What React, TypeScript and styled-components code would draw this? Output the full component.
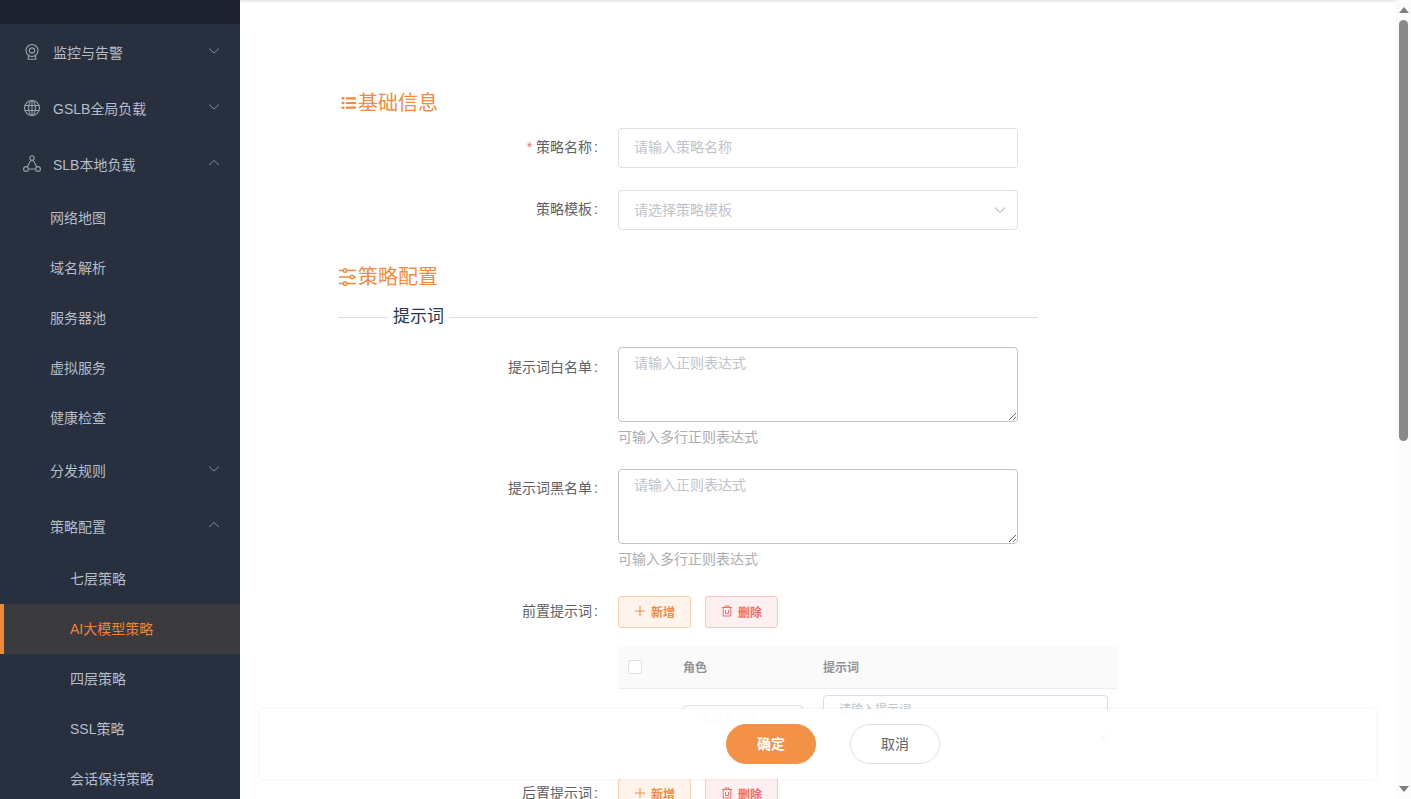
import React from "react";
import styled, { createGlobalStyle } from "styled-components";

const Global = createGlobalStyle`
  html, body { margin: 0; padding: 0; height: 100%; overflow: hidden; background: #fff; }
  * { box-sizing: border-box; }
  body { font-family: "Liberation Sans", "Noto Sans CJK SC", sans-serif; }
  input::placeholder, textarea::placeholder { color: #c0c4cc; }
`;

const Shell = styled.div`
  display: flex;
  width: 100vw;
  height: 100vh;
  overflow: hidden;
`;

const Sidebar = styled.aside`
  flex: 0 0 240px;
  height: 100%;
  overflow: hidden;
  background: #28303f;
  color: #b5bcc7;
  font-size: 14px;
`;

const SideTop = styled.div`
  height: 24px;
  background: #1d2430;
`;

const ParentRow = styled.div<{ $indent: number }>`
  height: 56px;
  display: flex;
  align-items: center;
  padding-left: ${(p) => p.$indent}px;
  position: relative;
  color: #b5bcc7;
  svg.lead { margin-right: 12px; flex: none; }
`;

const Chev = styled.svg`
  position: absolute;
  left: 208px;
  top: 23px;
`;

const SubRow = styled.div<{ $indent: number; $active?: boolean; $nudge?: boolean }>`
  height: 50px;
  display: flex;
  align-items: center;
  padding-left: ${(p) => (p.$active ? p.$indent - 4 : p.$indent)}px;
  padding-bottom: ${(p) => (p.$nudge ? 2 : 0)}px;
  background: ${(p) => (p.$active ? "#3a3a3f" : "transparent")};
  border-left: ${(p) => (p.$active ? "4px solid #f18a36" : "none")};
  color: ${(p) => (p.$active ? "#f58233" : "#b5bcc7")};
`;

const Main = styled.main`
  flex: 1;
  height: 100%;
  position: relative;
  overflow: hidden;
  padding: 89px 0 0 98px;
  box-shadow: inset 0 3px 3px -2px rgba(0, 0, 0, 0.14);
`;

const Form = styled.form`
  width: 780px;
  display: flex;
  flex-direction: column;
`;

const SectionTitle = styled.h3<{ $pl?: number }>`
  margin: 0 0 11px 0;
  height: 28px;
  padding-left: ${(p) => p.$pl ?? 0}px;
  display: flex;
  align-items: center;
  font-size: 20px;
  font-weight: 400;
  line-height: 28px;
  color: #f48a3c;
  gap: 2px;
`;

const Divider = styled.div`
  width: 700px;
  height: 22px;
  margin: 4px 0 19px;
  display: flex;
  align-items: center;
  font-size: 17px;
  color: #2c3550;
  &::before { content: ""; width: 50px; height: 1px; background: #dcdfe6; margin-right: 5px; }
  &::after { content: ""; flex: 1; height: 1px; background: #dcdfe6; margin-left: 5px; }
`;

const DividerText = styled.span`
  padding-bottom: 5px;
`;

const Field = styled.div<{ $mb?: number }>`
  display: grid;
  grid-template-columns: 280px 1fr;
  margin-bottom: ${(p) => p.$mb ?? 22}px;
`;

const Label = styled.label<{ $h?: number; $lift?: number }>`
  height: ${(p) => p.$h ?? 40}px;
  line-height: ${(p) => (p.$h ?? 40) - (p.$lift ?? 0)}px;
  padding-right: 20px;
  text-align: right;
  font-size: 14px;
  color: #606266;
  white-space: nowrap;
`;

const Star = styled.span`
  color: #f56c6c;
  margin-right: 4px;
`;

const Colon = styled.span`
  padding-left: 2px;
`;

const Control = styled.div`
  display: flex;
  flex-direction: column;
  min-width: 0;
`;

const TextInput = styled.input`
  width: 400px;
  height: 40px;
  padding: 0 15px 2px;
  border: 1px solid #dcdfe6;
  border-radius: 4px;
  font: inherit;
  font-size: 14px;
  background: #fff;
  outline: none;
`;

const SelectBox = styled.div`
  width: 400px;
  height: 40px;
  padding: 0 11px 2px 15px;
  border: 1px solid #dcdfe6;
  border-radius: 4px;
  font-size: 14px;
  color: #c0c4cc;
  display: flex;
  align-items: center;
  justify-content: space-between;
  svg { margin-top: 2px; }
`;

const Area = styled.textarea`
  display: block;
  width: 400px;
  height: 75px;
  padding: 5px 15px;
  border: 1px solid #c2c2ca;
  border-radius: 4px;
  font: inherit;
  font-size: 14px;
  line-height: 21px;
  resize: vertical;
  outline: none;
`;

const Hint = styled.div`
  font-size: 14px;
  line-height: 22px;
  margin-top: 4px;
  color: #adadb2;
`;

const BtnRow = styled.div`
  display: flex;
  gap: 14px;
  height: 32px;
`;

const ToolBtn = styled.button<{ $danger?: boolean }>`
  width: 73px;
  height: 32px;
  display: flex;
  align-items: center;
  justify-content: center;
  gap: 5px;
  padding: 0 0 2px;
  border-radius: 3px;
  font: inherit;
  font-size: 12px;
  font-weight: 700;
  border: 1px solid ${(p) => (p.$danger ? "#fbc4c4" : "#fbd3b3")};
  background: ${(p) => (p.$danger ? "#fef0f0" : "#fef4ec")};
  color: ${(p) => (p.$danger ? "#f56c6c" : "#f48a3c")};
`;

const Table = styled.div`
  width: 500px;
  margin-top: 18px;
  font-size: 12px;
`;

const HeadRow = styled.div`
  display: grid;
  grid-template-columns: 65px 140px 1fr;
  height: 43px;
  align-items: center;
  background: #fafafa;
  border-bottom: 1px solid #ebeef5;
  border-radius: 4px 4px 0 0;
  color: #909399;
  font-weight: 700;
`;

const HeadCell = styled.span`
  padding-bottom: 2px;
`;

const BodyRow = styled.div`
  display: grid;
  grid-template-columns: 65px 140px 1fr;
  height: 61px;
  align-items: center;
  border-bottom: 1px solid #ebeef5;
`;

const Check = styled.span`
  display: block;
  width: 14px;
  height: 14px;
  margin-left: 10px;
  border: 1px solid #dcdfe6;
  border-radius: 2px;
  background: #fff;
`;

const RoleInput = styled.input`
  width: 120px;
  height: 28px;
  padding: 0 15px;
  border: 1px solid #dcdfe6;
  border-radius: 4px;
  font: inherit;
  font-size: 12px;
  outline: none;
`;

const PromptArea = styled.textarea`
  display: block;
  width: 285px;
  height: 48px;
  padding: 5px 15px;
  border: 1px solid #dcdfe6;
  border-radius: 4px;
  font: inherit;
  font-size: 12px;
  line-height: 18px;
  resize: vertical;
  outline: none;
`;

const Footer = styled.div`
  position: absolute;
  left: 20px;
  right: 20px;
  bottom: 20px;
  height: 70px;
  display: flex;
  align-items: center;
  justify-content: center;
  gap: 34px;
  padding-left: 30px;
  background: rgba(255, 255, 255, 0.92);
  box-shadow: 0 0 4px rgba(0, 0, 0, 0.07);
`;

const PillBtn = styled.button<{ $primary?: boolean }>`
  width: 90px;
  height: 40px;
  padding: 0 0 2px;
  border-radius: 20px;
  font: inherit;
  font-size: 14px;
  font-weight: ${(p) => (p.$primary ? 700 : 400)};
  border: 1px solid ${(p) => (p.$primary ? "#f39247" : "#dcdfe6")};
  background: ${(p) => (p.$primary ? "#f39247" : "#fff")};
  color: ${(p) => (p.$primary ? "#fff" : "#606266")};
`;

const ScrollRail = styled.div`
  flex: 0 0 15px;
  height: 100%;
  background: #fbfbfb;
  display: flex;
  flex-direction: column;
  align-items: center;
  padding-top: 7px;
`;

const ArrowUp = styled.div`
  width: 0;
  height: 0;
  border-left: 5px solid transparent;
  border-right: 5px solid transparent;
  border-bottom: 6px solid #7e7e7e;
`;

const ArrowDown = styled.div`
  width: 0;
  height: 0;
  border-left: 5px solid transparent;
  border-right: 5px solid transparent;
  border-top: 6px solid #7e7e7e;
  margin-bottom: 7px;
`;

const Thumb = styled.div`
  width: 9px;
  height: 421px;
  margin-top: 7px;
  border-radius: 5px;
  background: #8a8a8a;
`;

const Spacer = styled.div`
  flex: 1;
`;

const ChevDown = () => (
  <Chev width="12" height="8" viewBox="0 0 12 8" fill="none" stroke="#7f8998" strokeWidth="1">
    <path d="M1 1.5 L6 6 L11 1.5" />
  </Chev>
);
const ChevUp = () => (
  <Chev width="12" height="8" viewBox="0 0 12 8" fill="none" stroke="#7f8998" strokeWidth="1">
    <path d="M1 6 L6 1.5 L11 6" />
  </Chev>
);

const CamIcon = () => (
  <svg className="lead" width="18" height="18" viewBox="0 0 18 18" fill="none" stroke="#98a0ad" strokeWidth="1.1">
    <circle cx="9" cy="7.5" r="6" />
    <circle cx="9" cy="7.5" r="2.6" />
    <path d="M5.5 13 L5 16.2 H13 L12.5 13" />
  </svg>
);
const GlobeIcon = () => (
  <svg className="lead" width="18" height="18" viewBox="0 0 18 18" fill="none" stroke="#98a0ad" strokeWidth="1.1">
    <circle cx="9" cy="9" r="7.5" />
    <ellipse cx="9" cy="9" rx="3.4" ry="7.5" />
    <path d="M1.8 6.5 H16.2 M1.8 11.5 H16.2 M9 1.5 V16.5" />
  </svg>
);
const NodesIcon = () => (
  <svg className="lead" width="18" height="18" viewBox="0 0 18 18" fill="none" stroke="#98a0ad" strokeWidth="1.1">
    <circle cx="9" cy="3" r="2.2" />
    <circle cx="3" cy="14" r="2.4" />
    <circle cx="15" cy="14" r="2.4" />
    <path d="M8 5 L4.2 12 M10 5 L13.8 12 M5.4 14 H12.6" />
  </svg>
);

const ListIcon = () => (
  <svg width="15" height="14" viewBox="0 0 15 14" fill="#f48a3c">
    <rect x="0.5" y="1" width="3" height="2.6" rx="1" />
    <rect x="0.5" y="5.7" width="3" height="2.6" rx="1" />
    <rect x="0.5" y="10.4" width="3" height="2.6" rx="1" />
    <rect x="5" y="1.2" width="10" height="2.2" rx="0.4" />
    <rect x="5" y="5.9" width="10" height="2.2" rx="0.4" />
    <rect x="5" y="10.6" width="10" height="2.2" rx="0.4" />
  </svg>
);
const SlidersIcon = () => (
  <svg width="18" height="18" viewBox="0 0 18 18" fill="none" stroke="#f48a3c" strokeWidth="1.4">
    <path d="M1 2.5 H5 M9 2.5 H18 M1 9 H12 M16 9 H18 M1 15.5 H5 M9 15.5 H18" />
    <circle cx="7" cy="2.5" r="1.8" />
    <circle cx="14" cy="9" r="1.8" />
    <circle cx="7" cy="15.5" r="1.8" />
  </svg>
);
const SelectChev = () => (
  <svg width="12" height="8" viewBox="0 0 12 8" fill="none" stroke="#c0c4cc" strokeWidth="1.1">
    <path d="M1 1.5 L6 6.5 L11 1.5" />
  </svg>
);
const PlusIcon = () => (
  <svg width="12" height="12" viewBox="0 0 12 12" fill="none" stroke="#f48a3c" strokeWidth="1">
    <path d="M6 1 V11 M1 6 H11" />
  </svg>
);
const TrashIcon = () => (
  <svg width="12" height="12" viewBox="0 0 12 12" fill="none" stroke="#f56c6c" strokeWidth="1">
    <path d="M1 2.5 H11 M4 2.5 V1 H8 V2.5 M2.2 2.5 V11 H9.8 V2.5 M4.5 5 V8.5 H7.5 V5" />
  </svg>
);

const Tools = () => (
  <BtnRow>
    <ToolBtn type="button"><PlusIcon />新增</ToolBtn>
    <ToolBtn type="button" $danger><TrashIcon />删除</ToolBtn>
  </BtnRow>
);

export default function App() {
  return (
    <Shell>
      <Global />
      <Sidebar>
        <SideTop />
        <ParentRow $indent={23}><CamIcon />监控与告警<ChevDown /></ParentRow>
        <ParentRow $indent={23}><GlobeIcon />GSLB全局负载<ChevDown /></ParentRow>
        <ParentRow $indent={23}><NodesIcon />SLB本地负载<ChevUp /></ParentRow>
        <SubRow $indent={50}>网络地图</SubRow>
        <SubRow $indent={50}>域名解析</SubRow>
        <SubRow $indent={50}>服务器池</SubRow>
        <SubRow $indent={50}>虚拟服务</SubRow>
        <SubRow $indent={50}>健康检查</SubRow>
        <ParentRow $indent={50}>分发规则<ChevDown /></ParentRow>
        <ParentRow $indent={50}>策略配置<ChevUp /></ParentRow>
        <SubRow $indent={70} $nudge>七层策略</SubRow>
        <SubRow $indent={70} $nudge $active>AI大模型策略</SubRow>
        <SubRow $indent={70} $nudge>四层策略</SubRow>
        <SubRow $indent={70} $nudge>SSL策略</SubRow>
        <SubRow $indent={70} $nudge>会话保持策略</SubRow>
      </Sidebar>
      <Main>
        <Form>
          <SectionTitle $pl={3}><ListIcon />基础信息</SectionTitle>
          <Field>
            <Label $lift={1}><Star>*</Star>策略名称<Colon>:</Colon></Label>
            <Control><TextInput placeholder="请输入策略名称" /></Control>
          </Field>
          <Field $mb={33}>
            <Label $lift={1}>策略模板<Colon>:</Colon></Label>
            <Control>
              <SelectBox>请选择策略模板<SelectChev /></SelectBox>
            </Control>
          </Field>
          <SectionTitle><SlidersIcon />策略配置</SectionTitle>
          <Divider><DividerText>提示词</DividerText></Divider>
          <Field $mb={21}>
            <Label>提示词白名单<Colon>:</Colon></Label>
            <Control>
              <Area placeholder="请输入正则表达式" />
              <Hint>可输入多行正则表达式</Hint>
            </Control>
          </Field>
          <Field $mb={26}>
            <Label $lift={2}>提示词黑名单<Colon>:</Colon></Label>
            <Control>
              <Area placeholder="请输入正则表达式" />
              <Hint>可输入多行正则表达式</Hint>
            </Control>
          </Field>
          <Field $mb={28}>
            <Label $h={32} $lift={2}>前置提示词<Colon>:</Colon></Label>
            <Control>
              <Tools />
              <Table>
                <HeadRow>
                  <Check />
                  <HeadCell>角色</HeadCell>
                  <HeadCell>提示词</HeadCell>
                </HeadRow>
                <BodyRow>
                  <Check />
                  <RoleInput placeholder="请输入角色" />
                  <PromptArea placeholder="请输入提示词" />
                </BodyRow>
              </Table>
            </Control>
          </Field>
          <Field>
            <Label $h={32} $lift={2}>后置提示词<Colon>:</Colon></Label>
            <Control><Tools /></Control>
          </Field>
        </Form>
        <Footer>
          <PillBtn type="button" $primary>确定</PillBtn>
          <PillBtn type="button">取消</PillBtn>
        </Footer>
      </Main>
      <ScrollRail>
        <ArrowUp />
        <Thumb />
        <Spacer />
        <ArrowDown />
      </ScrollRail>
    </Shell>
  );
}
